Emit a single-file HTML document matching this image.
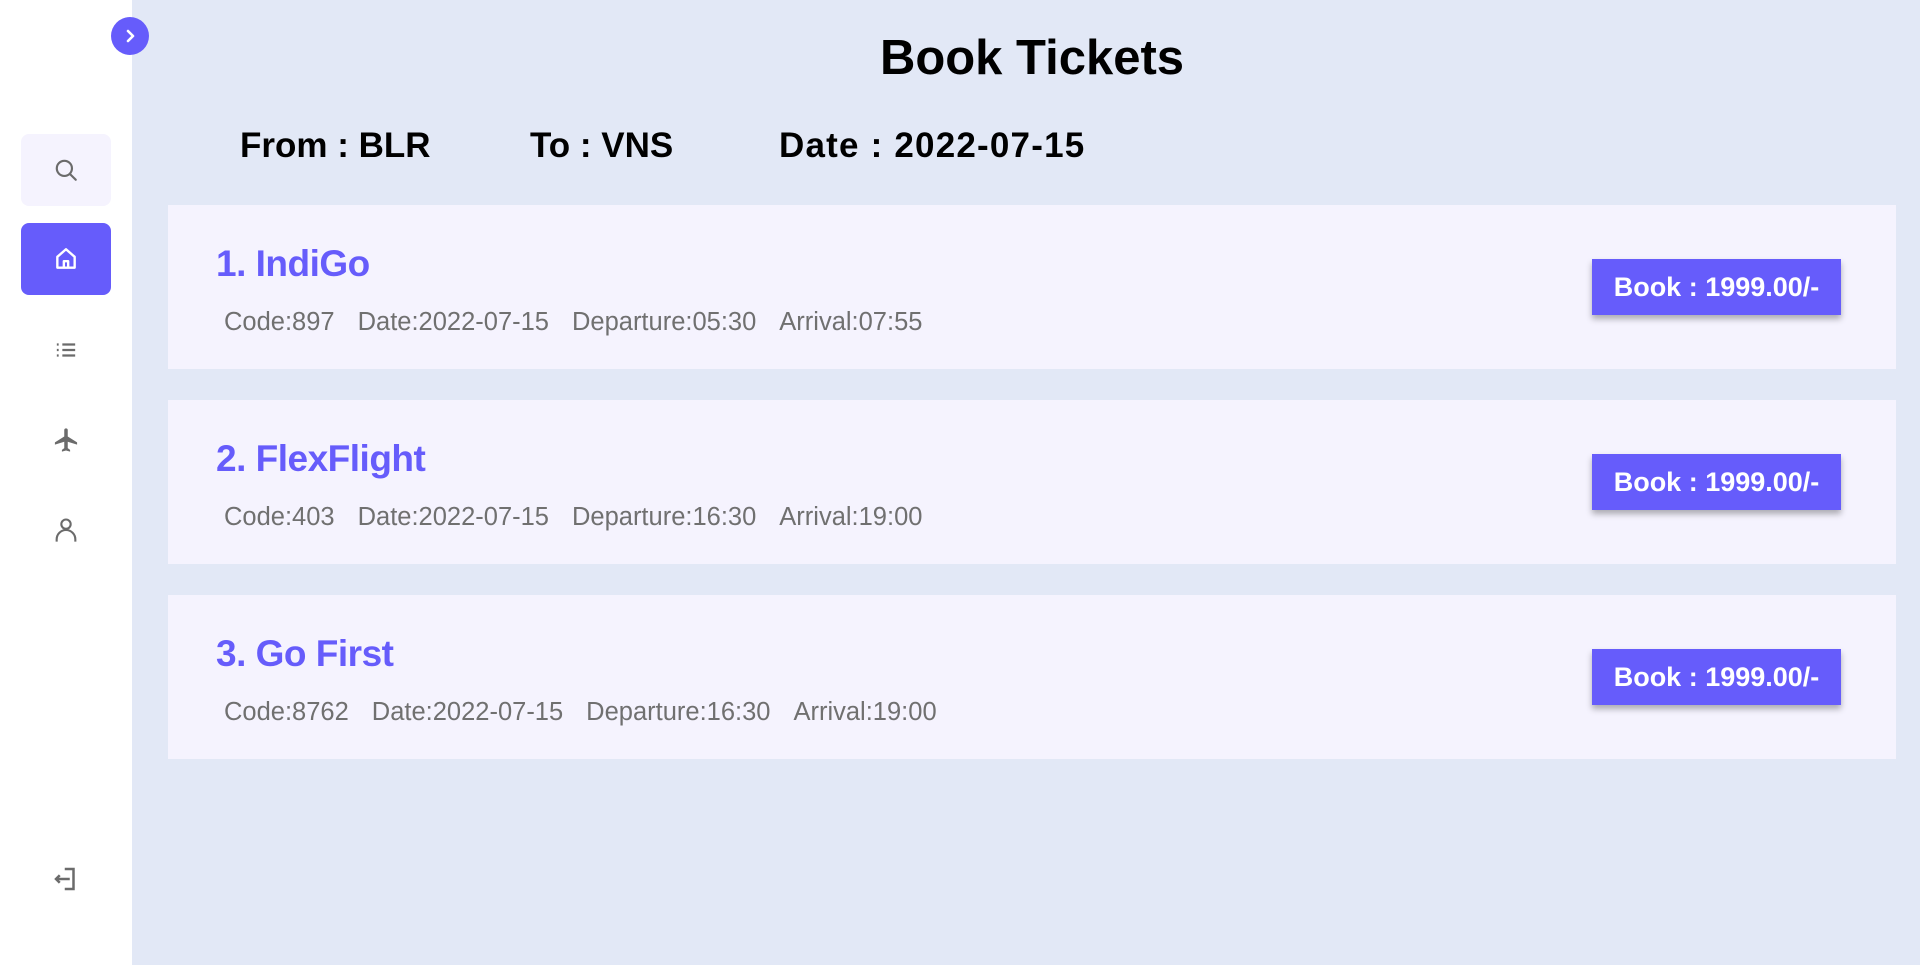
<!DOCTYPE html>
<html><head><meta charset="utf-8"><style>
*{margin:0;padding:0;box-sizing:border-box}
body{width:1920px;height:965px;background:#e2e8f6;font-family:"Liberation Sans",sans-serif;position:relative;overflow:hidden}
.side{position:absolute;left:0;top:0;width:132px;height:965px;background:#fff}
.tog{position:absolute;left:111px;top:17px;width:38px;height:38px;border-radius:50%;background:#665cfb;display:flex;align-items:center;justify-content:center}
.nav{position:absolute;left:21px;width:90px;height:72px;border-radius:8px;display:flex;align-items:center;justify-content:center}
h1{position:absolute;left:0;width:2064px;top:30px;text-align:center;font-size:49px;font-weight:bold;color:#000}
.info{position:absolute;top:126px;font-size:35px;font-weight:bold;color:#000}
.card{position:absolute;left:168px;width:1728px;height:164px;background:#f5f3fe}
.card .t{position:absolute;left:48px;top:38px;font-size:37px;font-weight:bold;color:#665cfb;letter-spacing:-0.5px}
.card .d{position:absolute;left:56px;top:103px;font-size:25.5px;color:#707070}
.card .d span{margin-right:23px}
.btn{position:absolute;left:1424px;top:54px;width:249px;height:56px;background:#665cfb;color:#fff;font-size:27px;font-weight:bold;display:flex;align-items:center;justify-content:center;box-shadow:0 4px 6px rgba(0,0,0,.3)}
</style></head><body>
<div class="side">
<div class="nav" style="top:134px;background:#f5f3fe"><svg width="26" height="26" viewBox="0 0 24 24" fill="none" stroke="#6b6b6b" stroke-width="2"><circle cx="10.5" cy="10.5" r="7"/><path d="M16 16l5 5" stroke-linecap="round"/></svg></div>
<div class="nav" style="top:223px;background:#665cfb"><svg width="26" height="26" viewBox="0 0 24 24" fill="none" stroke="#fff" stroke-width="2.2" stroke-linejoin="round"><path d="M4 10l8-7 8 7v10H4z"/><path d="M10 20v-6h4v6"/></svg></div>
<div class="nav" style="top:314px"><svg width="22" height="22" viewBox="0 0 24 24" fill="none" stroke="#6b6b6b" stroke-width="2.4"><path d="M2 6h2M2 12h2M2 18h2M8 6h14M8 12h14M8 18h14"/></svg></div>
<div class="nav" style="top:404px"><svg width="28" height="28" viewBox="0 0 24 24" fill="#6b6b6b"><path d="M21 16v-2l-8-5V3.5a1.5 1.5 0 0 0-3 0V9l-8 5v2l8-2.5V19l-2 1.5V22l3.5-1 3.5 1v-1.5L13 19v-5.5z" transform="translate(0.5 0)"/></svg></div>
<div class="nav" style="top:494px"><svg width="28" height="28" viewBox="0 0 24 24" fill="none" stroke="#6b6b6b" stroke-width="1.8"><circle cx="12" cy="7" r="4"/><path d="M4 22v-2a7 7 0 0 1 16 0v2"/></svg></div>
<div class="nav" style="top:843px"><svg width="30" height="30" viewBox="0 0 24 24" fill="none" stroke="#6b6b6b" stroke-width="2"><path d="M11 4h7v16h-7"/><path d="M15 12H4M7 9l-3 3 3 3"/></svg></div>
</div>
<div class="tog"><svg width="16" height="16" viewBox="0 0 16 16" fill="none" stroke="#fff" stroke-width="2.6" stroke-linecap="round" stroke-linejoin="round"><path d="M6 3l5 5-5 5"/></svg></div>
<h1>Book Tickets</h1>
<div class="info" style="left:240px">From : BLR</div>
<div class="info" style="left:530px">To : VNS</div>
<div class="info" style="left:779px;letter-spacing:1.2px">Date : 2022-07-15</div>
<div class="card" style="top:205px"><div class="t">1. IndiGo</div><div class="d"><span>Code:897</span><span>Date:2022-07-15</span><span>Departure:05:30</span><span>Arrival:07:55</span></div><div class="btn">Book : 1999.00/-</div></div>
<div class="card" style="top:400px"><div class="t">2. FlexFlight</div><div class="d"><span>Code:403</span><span>Date:2022-07-15</span><span>Departure:16:30</span><span>Arrival:19:00</span></div><div class="btn">Book : 1999.00/-</div></div>
<div class="card" style="top:595px"><div class="t">3. Go First</div><div class="d"><span>Code:8762</span><span>Date:2022-07-15</span><span>Departure:16:30</span><span>Arrival:19:00</span></div><div class="btn">Book : 1999.00/-</div></div>
</body></html>
